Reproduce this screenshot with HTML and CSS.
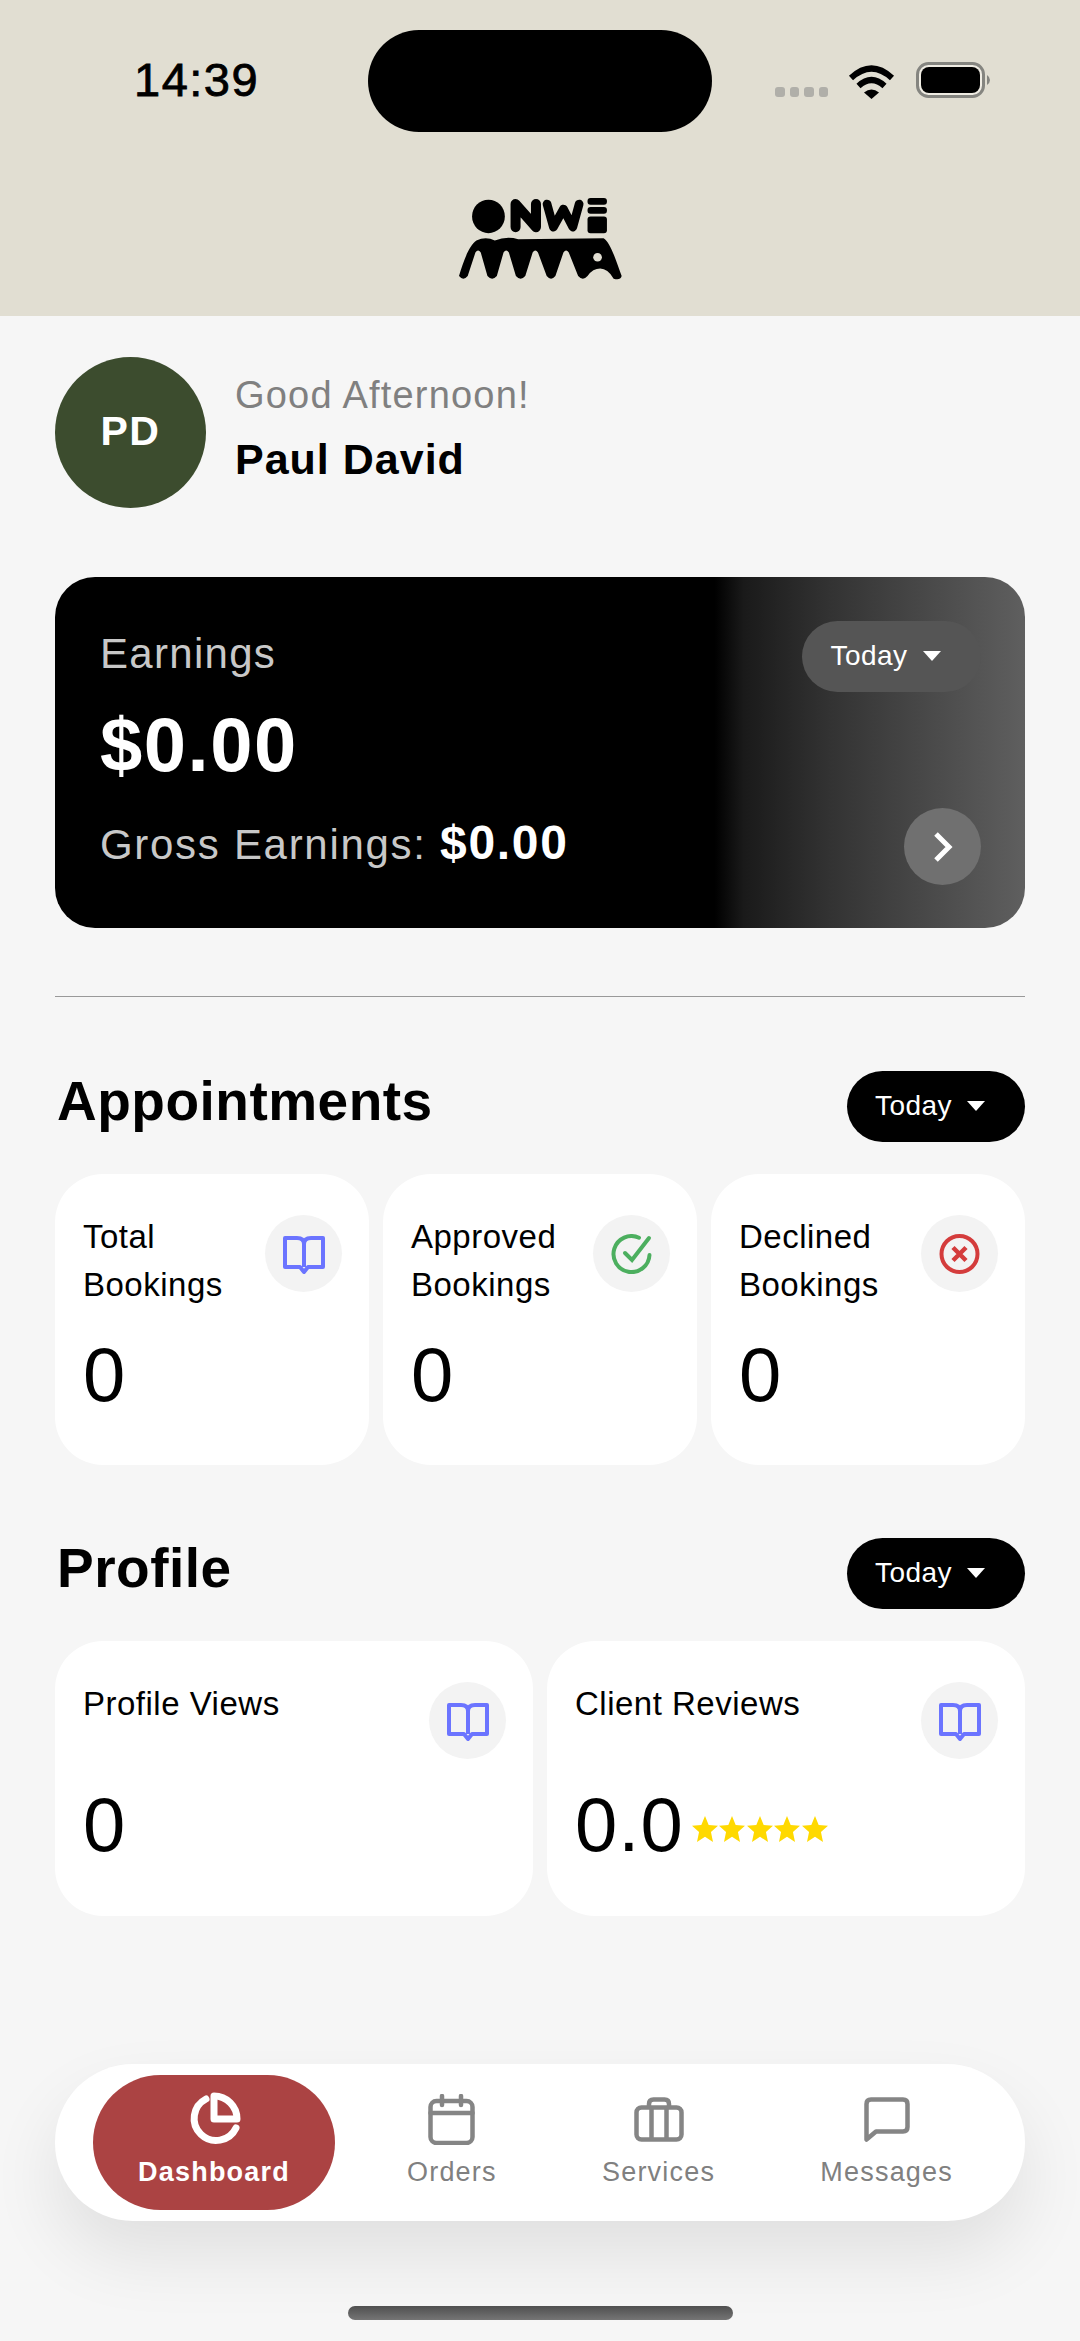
FILE: index.html
```html
<!DOCTYPE html>
<html lang="en">
<head>
    <meta charset="UTF-8">
    <meta name="viewport" content="width=device-width, initial-scale=1.0">
    <title>Dashboard</title>
    <link rel="stylesheet" href="styles.css">
</head>
<body>
    <svg class="defs" width="0" height="0">
        <symbol id="book" viewBox="0 0 42 40">
            <path d="M2 4H14Q21 4 21 10Q21 4 28 4H40V33H25L21 38L17 33H2ZM21 10V33" fill="none" stroke="#6b74ff" stroke-width="4" stroke-linejoin="round"/>
        </symbol>
        <symbol id="star" viewBox="0 0 24 24">
            <path d="M12 0L15.4 8.2L24 9L17.5 14.8L19.4 24L12 19.2L4.6 24L6.5 14.8L0 9L8.6 8.2Z" fill="#ffd900"/>
        </symbol>
        <symbol id="caret" viewBox="0 0 18 10">
            <path d="M0 0H18L9 10Z" fill="#fff"/>
        </symbol>
    </svg>

    <section class="top">
        <div class="status">
            <div class="time">14:39</div>
            <div class="island"></div>
            <div class="status-icons">
                <div class="dots"><span></span><span></span><span></span><span></span></div>
                <svg class="wifi" width="47" height="34" viewBox="0 0 47 34">
                    <path d="M3 13Q23.500 -6 44 13" fill="none" stroke="#000" stroke-width="6"/>
                    <path d="M10.500 21Q23.500 9 36.500 21" fill="none" stroke="#000" stroke-width="6"/>
                    <path d="M16 27.500Q23.500 21.500 31 27.500L23.500 34Z"/>
                </svg>
                <svg class="battery" width="74" height="36" viewBox="0 0 74 36">
                    <rect x="1.500" y="1.500" width="66" height="33" rx="11" fill="#efece3" stroke="#858580" stroke-width="3"/>
                    <rect x="5" y="5" width="59" height="26" rx="8"/>
                    <path d="M71 13Q74 15 74 18Q74 21 71 23Z" fill="#858580"/>
                </svg>
            </div>
        </div>
        <svg class="logo" width="164" height="82" viewBox="175 85 490 245">
            <ellipse cx="266" cy="140" rx="49" ry="50"/>
            <g fill="none" stroke="#000" stroke-width="30" stroke-linecap="round" stroke-linejoin="round">
                <path d="M347 172V103L408 172V103"/>
                <path d="M441 103L460 172L490 118L518 172L537 103" stroke-width="26"/>
            </g>
            <path d="M178 318C190 280 205 230 230 212Q258 198 285 212Q320 198 355 208L610 205C630 215 650 280 664 318Q660 332 640 326Q622 296 600 296Q578 296 562 318Q548 334 534 318L506 248Q498 236 490 248L466 318Q453 334 440 318L414 248Q406 236 398 248L376 318Q362 334 348 318L327 248Q319 236 311 248L291 318Q277 334 263 318L243 248Q235 236 227 248L204 318Q191 334 178 318Z"/>
            <circle cx="592" cy="262" r="13" fill="#e1ded2"/>
            <rect x="562" y="85" width="58" height="20" rx="9"/>
            <rect x="562" y="112" width="58" height="20" rx="9"/>
            <rect x="562" y="140" width="58" height="50" rx="9"/>
        </svg>
    </section>

    <section class="main">
        <div class="greeting">
            <div class="avatar">PD</div>
            <div class="greeting-text">
                <div class="hello">Good Afternoon!</div>
                <div class="name">Paul David</div>
            </div>
        </div>

        <div class="earnings">
            <div class="earn-row">
                <div class="earn-label">Earnings</div>
                <div class="pill pill-glass">Today <svg width="18" height="10"><use href="#caret"/></svg></div>
            </div>
            <div class="earn-amount">$0.00</div>
            <div class="earn-row earn-bottom">
                <div class="earn-gross">Gross Earnings: <b>$0.00</b></div>
                <div class="earn-go">
                    <svg width="22" height="34" viewBox="0 0 22 34"><path d="M4 4L17 17L4 30" fill="none" stroke="#fff" stroke-width="5"/></svg>
                </div>
            </div>
        </div>

        <div class="divider"></div>

        <div class="sec-head">
            <h2>Appointments</h2>
            <div class="pill">Today <svg width="18" height="10"><use href="#caret"/></svg></div>
        </div>
        <div class="cards">
            <div class="card card-tall">
                <div class="card-head">
                    <div class="card-title">Total<br>Bookings</div>
                    <div class="ico"><svg width="42" height="40"><use href="#book"/></svg></div>
                </div>
                <div class="value">0</div>
            </div>
            <div class="card card-tall">
                <div class="card-head">
                    <div class="card-title">Approved<br>Bookings</div>
                    <div class="ico">
                        <svg width="41" height="40" viewBox="0 0 41 40" fill="none" stroke="#4caf5f" stroke-width="4" stroke-linecap="round">
                            <path d="M38.500 21A18 18 0 1 1 28 3.700"/>
                            <path d="M14 19L21 26L38 4"/>
                        </svg>
                    </div>
                </div>
                <div class="value">0</div>
            </div>
            <div class="card card-tall">
                <div class="card-head">
                    <div class="card-title">Declined<br>Bookings</div>
                    <div class="ico">
                        <svg width="41" height="40" viewBox="0 0 41 40" fill="none" stroke="#d43c3c" stroke-width="4">
                            <circle cx="20.500" cy="20" r="18"/>
                            <path d="M14 13.500L27 26.500M27 13.500L14 26.500" stroke-width="4.500"/>
                        </svg>
                    </div>
                </div>
                <div class="value">0</div>
            </div>
        </div>

        <div class="sec-head sec-profile">
            <h2>Profile</h2>
            <div class="pill">Today <svg width="18" height="10"><use href="#caret"/></svg></div>
        </div>
        <div class="cards">
            <div class="card card-wide">
                <div class="card-head">
                    <div class="card-title">Profile Views</div>
                    <div class="ico"><svg width="42" height="40"><use href="#book"/></svg></div>
                </div>
                <div class="value">0</div>
            </div>
            <div class="card card-wide">
                <div class="card-head">
                    <div class="card-title">Client Reviews</div>
                    <div class="ico"><svg width="42" height="40"><use href="#book"/></svg></div>
                </div>
                <div class="value-row">
                    <div class="value">0.0</div>
                    <div class="stars">
                        <svg width="26" height="26"><use href="#star"/></svg>
                        <svg width="26" height="26"><use href="#star"/></svg>
                        <svg width="26" height="26"><use href="#star"/></svg>
                        <svg width="26" height="26"><use href="#star"/></svg>
                        <svg width="26" height="26"><use href="#star"/></svg>
                    </div>
                </div>
            </div>
        </div>

        <nav class="nav">
            <div class="nav-item nav-active">
                <div class="nav-icon">
                    <svg width="54" height="54" viewBox="0 0 54 54" fill="none" stroke="#fff" stroke-width="7" stroke-linecap="round" stroke-linejoin="round">
                        <path d="M19 7A22 22 0 1 0 49 36"/>
                        <path d="M27 4A23 23 0 0 1 50 27H27Z"/>
                    </svg>
                </div>
                <div class="nav-label">Dashboard</div>
            </div>
            <div class="nav-links">
                <div class="nav-item">
                    <div class="nav-icon">
                        <svg width="47" height="51" viewBox="0 0 47 51" fill="none" stroke="#858585" stroke-width="4.500" stroke-linecap="round">
                            <rect x="2.500" y="7" width="42" height="42" rx="6"/>
                            <path d="M2.500 19H44.500M14 2V11M33 2V11"/>
                        </svg>
                    </div>
                    <div class="nav-label">Orders</div>
                </div>
                <div class="nav-item">
                    <div class="nav-icon">
                        <svg width="50" height="45" viewBox="0 0 50 45" fill="none" stroke="#858585" stroke-width="4.500">
                            <rect x="2.500" y="10.500" width="45" height="32" rx="5"/>
                            <path d="M15 10V7Q15 2.500 19.500 2.500H30.500Q35 2.500 35 7V10M17.500 10.500V42.500M32.500 10.500V42.500"/>
                        </svg>
                    </div>
                    <div class="nav-label">Services</div>
                </div>
                <div class="nav-item">
                    <div class="nav-icon">
                        <svg width="46" height="45" viewBox="0 0 46 45" fill="none" stroke="#858585" stroke-width="4.500" stroke-linejoin="round">
                            <path d="M2.500 7Q2.500 2.500 7 2.500H39Q43.500 2.500 43.500 7V30Q43.500 34.500 39 34.500H12L2.500 42.500Z"/>
                        </svg>
                    </div>
                    <div class="nav-label">Messages</div>
                </div>
            </div>
        </nav>

        <div class="home-bar"></div>
    </section>
</body>
</html>
```

FILE: styles.css
```css
*{
    margin:0;padding:0;box-sizing:border-box;font-family:"Liberation Sans",Arial,sans-serif;
}
body{
    background-color:#f6f6f6;
    width:1080px;
    height:2341px;
    overflow:hidden;
    color:#000;
}
.defs{
    position:absolute;
}
.top{
    background-color:#e1ded2;
    height:316px;
    padding-top:30px;
    display:flex;
    flex-direction:column;
    align-items:center;
}
.status{
    width:100%;
    display:flex;
    padding-left:134px;
}
.time{
    width:234px;
    padding-top:23px;
    font-size:47px;
    line-height:54px;
    letter-spacing:1.5px;
    -webkit-text-stroke:0.8px #000;
}
.island{
    width:344px;
    height:102px;
    border-radius:51px;
    background-color:#000;
}
.status-icons{
    margin-left:63px;
    height:68px;
    padding-top:32px;
    display:flex;
    align-items:flex-end;
}
.dots{
    display:flex;
    gap:5px;
    width:53px;
    height:10px;
    margin-bottom:1px;
}
.dots span{
    width:9.5px;
    height:10px;
    border-radius:3px;
    background-color:#b0afa9;
}
.wifi{
    margin-left:20px;
    margin-bottom:-1px;
}
.battery{
    margin-left:21px;
}
.logo{
    margin-top:66px;
}
.main{
    padding:0 55px;
}
.greeting{
    margin-top:41px;
    display:flex;
    align-items:center;
    gap:29px;
}
.greeting-text{
    padding-bottom:9px;
}
.avatar{
    width:151px;
    height:151px;
    padding-bottom:3px;
    border-radius:50%;
    background-color:#3c4c2e;
    color:#fff;
    font-size:41px;
    font-weight:700;
    letter-spacing:1.5px;
    display:flex;
    align-items:center;
    justify-content:center;
}
.hello{
    font-size:38px;
    letter-spacing:1.2px;
    line-height:46px;
    color:#808080;
}
.name{
    margin-top:16px;
    font-size:43px;
    font-weight:700;
    letter-spacing:1px;
    line-height:50px;
}
.earnings{
    margin-top:69px;
    height:351px;
    padding:44px 44px 43px 45px;
    border-radius:40px;
    background:linear-gradient(90deg,#000 0%,#000 68%,#1a1a1a 71%,#333 80%,#5f5f5f 100%);
    display:flex;
    flex-direction:column;
    justify-content:space-between;
}
.earn-row{
    display:flex;
    justify-content:space-between;
    align-items:center;
}
.earn-label{
    padding-bottom:6px;
    font-size:42px;
    letter-spacing:1.3px;
    color:#c8c8c8;
}
.earn-amount{
    font-size:76px;
    font-weight:700;
    line-height:84px;
    letter-spacing:1.5px;
    color:#fff;
    padding-bottom:10px;
}
.earn-gross{
    padding-bottom:8px;
    font-size:42px;
    letter-spacing:1.7px;
    color:#c8c8c8;
}
.earn-gross b{
    font-size:48px;
    color:#fff;
}
.earn-go{
    width:77px;
    height:77px;
    border-radius:50%;
    background-color:#707070;
    display:flex;
    align-items:center;
    justify-content:center;
}
.pill{
    width:178px;
    height:71px;
    padding:0 12px 2px 0;
    border-radius:36px;
    background-color:#000;
    color:#fff;
    font-size:28px;
    letter-spacing:0.5px;
    display:flex;
    align-items:center;
    justify-content:center;
    gap:15px;
}
.pill-glass{
    width:179px;
    background-color:#555;
}
.divider{
    margin-top:68px;
    height:1px;
    background-color:#999;
}
.sec-head{
    margin-top:74px;
    display:flex;
    justify-content:space-between;
    align-items:center;
}
.sec-profile{
    margin-top:73px;
}
.sec-head h2{
    padding:0 0 11px 2px;
    font-size:55px;
    line-height:60px;
    font-weight:700;
    letter-spacing:0.5px;
}
.cards{
    margin-top:32px;
    display:flex;
    gap:14px;
}
.card{
    flex:1;
    background-color:#fff;
    border-radius:48px;
    padding:39px 27px 0 28px;
}
.card-tall{
    height:291px;
}
.card-wide{
    height:275px;
}
.card-head{
    display:flex;
    justify-content:space-between;
    align-items:flex-start;
}
.card-title{
    font-size:33px;
    line-height:48px;
    letter-spacing:0.5px;
}
.ico{
    width:77px;
    height:77px;
    margin-top:2px;
    flex:none;
    border-radius:50%;
    background-color:#f3f3f3;
    display:flex;
    align-items:center;
    justify-content:center;
}
.value{
    margin-top:24px;
    font-size:76px;
    line-height:84px;
    letter-spacing:1px;
}
.value-row{
    display:flex;
    align-items:center;
}
.stars{
    margin-top:32px;
    margin-left:8px;
    display:flex;
    gap:1.5px;
}
.nav{
    margin-top:148px;
    height:157px;
    padding:11px 72px 11px 38px;
    border-radius:78px;
    background-color:#fff;
    box-shadow:0 34px 70px rgba(0,0,0,0.09);
    display:flex;
}
.nav-links{
    flex:1;
    margin-left:72px;
    display:flex;
    justify-content:space-between;
}
.nav-item{
    padding-top:17px;
    display:flex;
    flex-direction:column;
    align-items:center;
    color:#808080;
}
.nav-active{
    width:242px;
    height:135px;
    border-radius:68px;
    background-color:#ab4343;
    color:#fff;
}
.nav-active .nav-label{
    font-weight:700;
}
.nav-icon{
    height:54px;
    display:flex;
    align-items:center;
}
.nav-label{
    margin-top:9px;
    font-size:27px;
    line-height:34px;
    letter-spacing:1.2px;
}
.home-bar{
    margin:85px auto 0;
    width:385px;
    height:14px;
    border-radius:7px;
    background:linear-gradient(180deg,#4f4f4f,#757575);
}
```
